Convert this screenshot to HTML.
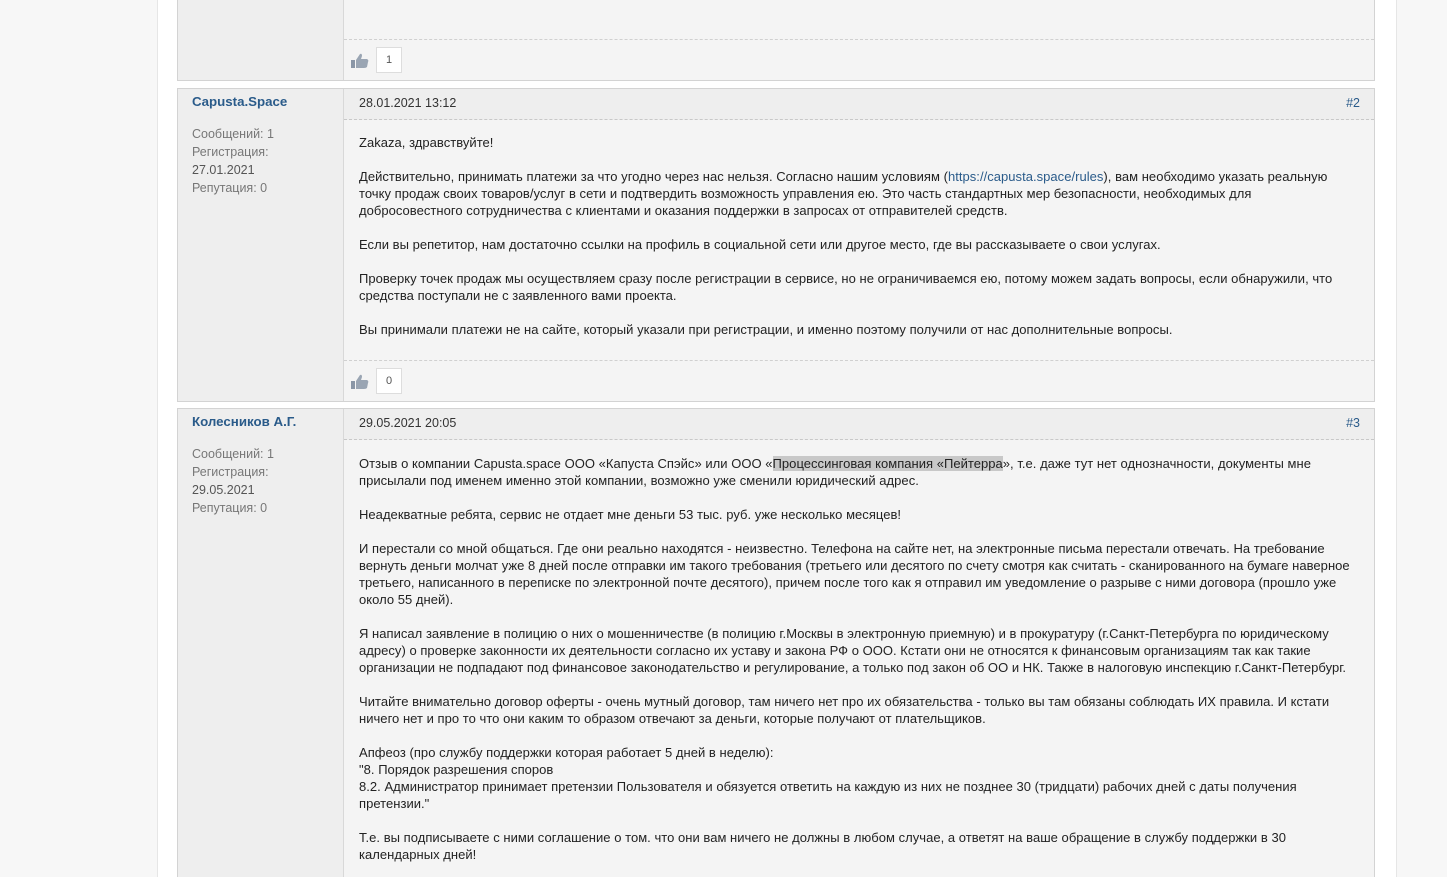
<!DOCTYPE html>
<html><head><meta charset="utf-8"><style>
html{overflow:hidden;height:877px;}
body{margin:0;width:1447px;height:877px;overflow:hidden;position:relative;background:#f7f7f7;font-family:"Liberation Sans",sans-serif;color:#333;}
.wrap{position:absolute;left:157px;top:0;width:1238px;height:877px;background:#fff;border-left:1px solid #e6e6e6;border-right:1px solid #e6e6e6;}
.post{position:absolute;left:177px;width:1196px;border:1px solid #d3d3d3;background:#f4f4f4;}
.user{position:absolute;left:0;top:0;bottom:0;width:165px;background:#eeeeee;border-right:1px solid #d8d8d8;}
.name{position:absolute;left:14px;top:5px;font-weight:bold;font-size:13.3px;color:#2a5b8a;}
.info{position:absolute;left:14px;top:36px;font-size:12.5px;line-height:18px;color:#777;}
.info b{font-weight:normal;color:#555;}
.head{position:absolute;left:166px;right:0;top:0;height:30px;background:#eeeeee;border-bottom:1px dashed #c8c8c8;font-size:12.5px;}
.head .d{position:absolute;left:15px;top:7px;color:#333;}
.head .n{position:absolute;right:14px;top:7px;color:#2a5b8a;}
.body{position:absolute;left:181px;font-size:13px;line-height:17px;white-space:nowrap;color:#222;letter-spacing:0.03px;}
.foot{position:absolute;left:166px;right:0;border-top:1px dashed #d0d0d0;}
.like{position:absolute;left:7px;}
.cnt{position:absolute;left:32px;width:24px;height:24px;background:#fff;border:1px solid #ddd;font-size:11px;color:#555;text-align:center;line-height:24px;}
.hl{background:#c8c8c8;}
a{color:#2a5b8a;text-decoration:none}
</style></head><body>
<div class="wrap"></div>

<div class="post" style="top:-1px;height:80px;">
<div class="user"></div>
<div class="foot" style="top:39px;height:40px;">
<svg class="like" style="top:13px" width="18" height="16" viewBox="0 0 18 16"><rect x="0" y="7" width="4" height="8" fill="#8a96a6"/><path d="M5 7 L9 1 Q11 0 11 3 L10 6 L16 6 Q18 7 17 9 L16 14 Q15 15 13 15 L5 15Z" fill="#9aa5b3"/></svg>
<div class="cnt" style="top:7px">1</div>
</div>
</div>

<div class="post" style="top:88px;height:312px;">
<div class="user"><div class="name">Capusta.Space</div>
<div class="info">Сообщений: 1<br>Регистрация:<br><b>27.01.2021</b><br>Репутация: 0</div></div>
<div class="head"><span class="d">28.01.2021 13:12</span><span class="n">#2</span></div>
<div class="body" style="top:45px;">Zakaza, здравствуйте!<br><br>
Действительно, принимать платежи за что угодно через нас нельзя. Согласно нашим условиям (<a>https://capusta.space/rules</a>), вам необходимо указать реальную<br>
точку продаж своих товаров/услуг в сети и подтвердить возможность управления ею. Это часть стандартных мер безопасности, необходимых для<br>
добросовестного сотрудничества с клиентами и оказания поддержки в запросах от отправителей средств.<br><br>
Если вы репетитор, нам достаточно ссылки на профиль в социальной сети или другое место, где вы рассказываете о свои услугах.<br><br>
Проверку точек продаж мы осуществляем сразу после регистрации в сервисе, но не ограничиваемся ею, потому можем задать вопросы, если обнаружили, что<br>
средства поступали не с заявленного вами проекта.<br><br>
Вы принимали платежи не на сайте, который указали при регистрации, и именно поэтому получили от нас дополнительные вопросы.</div>
<div class="foot" style="top:271px;height:40px;">
<svg class="like" style="top:13px" width="18" height="16" viewBox="0 0 18 16"><rect x="0" y="7" width="4" height="8" fill="#8a96a6"/><path d="M5 7 L9 1 Q11 0 11 3 L10 6 L16 6 Q18 7 17 9 L16 14 Q15 15 13 15 L5 15Z" fill="#9aa5b3"/></svg>
<div class="cnt" style="top:7px">0</div>
</div>
</div>

<div class="post" style="top:408px;height:480px;">
<div class="user"><div class="name">Колесников А.Г.</div>
<div class="info">Сообщений: 1<br>Регистрация:<br><b>29.05.2021</b><br>Репутация: 0</div></div>
<div class="head"><span class="d">29.05.2021 20:05</span><span class="n">#3</span></div>
<div class="body" style="top:46px;">Отзыв о компании Capusta.space ООО «Капуста Спэйс» или ООО «<span class="hl">Процессинговая компания «Пейтерра</span>», т.е. даже тут нет однозначности, документы мне<br>
присылали под именем именно этой компании, возможно уже сменили юридический адрес.<br><br>
Неадекватные ребята, сервис не отдает мне деньги 53 тыс. руб. уже несколько месяцев!<br><br>
И перестали со мной общаться. Где они реально находятся - неизвестно. Телефона на сайте нет, на электронные письма перестали отвечать. На требование<br>
вернуть деньги молчат уже 8 дней после отправки им такого требования (третьего или десятого по счету смотря как считать - сканированного на бумаге наверное<br>
третьего, написанного в переписке по электронной почте десятого), причем после того как я отправил им уведомление о разрыве с ними договора (прошло уже<br>
около 55 дней).<br><br>
Я написал заявление в полицию о них о мошенничестве (в полицию г.Москвы в электронную приемную) и в прокуратуру (г.Санкт-Петербурга по юридическому<br>
адресу) о проверке законности их деятельности согласно их уставу и закона РФ о ООО. Кстати они не относятся к финансовым организациям так как такие<br>
организации не подпадают под финансовое законодательство и регулирование, а только под закон об ОО и НК. Также в налоговую инспекцию г.Санкт-Петербург.<br><br>
Читайте внимательно договор оферты - очень мутный договор, там ничего нет про их обязательства - только вы там обязаны соблюдать ИХ правила. И кстати<br>
ничего нет и про то что они каким то образом отвечают за деньги, которые получают от плательщиков.<br><br>
Апфеоз (про службу поддержки которая работает 5 дней в неделю):<br>
"8. Порядок разрешения споров<br>
8.2. Администратор принимает претензии Пользователя и обязуется ответить на каждую из них не позднее 30 (тридцати) рабочих дней с даты получения<br>
претензии."<br><br>
Т.е. вы подписываете с ними соглашение о том. что они вам ничего не должны в любом случае, а ответят на ваше обращение в службу поддержки в 30<br>
календарных дней!</div>
</div>
</body></html>
